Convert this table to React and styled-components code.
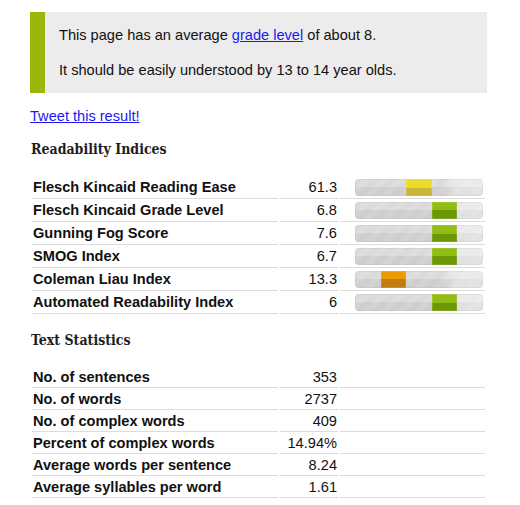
import React from "react";
import styled, { createGlobalStyle } from "styled-components";

const Global = createGlobalStyle`
  html, body { margin: 0; padding: 0; background: #fff; }
  body { font-family: "Liberation Sans", Arial, sans-serif; font-size: 14.6px; color: #111; }
`;

const Page = styled.div`
  width: 457px;
  padding: 12px 0 0 30px;
  display: flex;
  flex-direction: column;
`;

const Summary = styled.div`
  background: #ececec;
  border-left: 15px solid #99b80b;
  padding: 14px 14px;
  display: flex;
  flex-direction: column;
  gap: 17px;
`;

const Para = styled.p`
  margin: 0;
  line-height: 18px;
  font-size: 14.6px;
  color: #111;
`;

const Link = styled.a`
  color: #1a1aee;
  text-decoration: underline;
`;

const TweetLink = styled(Link)`
  margin-top: 14px;
  line-height: 18px;
  align-self: flex-start;
`;

const Heading = styled.h2`
  margin: ${(p) => p.$top}px 0 0 1px;
  font-family: "DejaVu Serif Condensed", "DejaVu Serif", serif;
  font-weight: bold;
  font-size: 14px;
  line-height: 18px;
  color: #1e1e1e;
`;

const Table = styled.div`
  margin-top: ${(p) => p.$top}px;
  display: grid;
  grid-template-columns: 246px 58px 145px;
  column-gap: 2px;
  padding: 0 2px;
`;

const Cell = styled.div`
  border-bottom: 1px solid #dcdcdc;
  height: ${(p) => p.$h}px;
  display: flex;
  align-items: center;
  font-size: 14.6px;
  color: #111;
`;

const Label = styled(Cell)`
  font-weight: bold;
  padding-left: 1px;
`;

const Value = styled(Cell)`
  justify-content: flex-end;
  padding-right: 1px;
`;

const BarCell = styled(Cell)`
  padding-left: 15px;
`;

const Bar = styled.div`
  position: relative;
  width: 128px;
  height: 17px;
  border-radius: 4px;
  overflow: hidden;
  box-shadow: inset 0 0 0 1px rgba(0, 0, 0, 0.04);
  background:
    linear-gradient(to bottom, rgba(255, 255, 255, 0.18) 0 50%, rgba(0, 0, 0, 0.02) 50% 100%),
    repeating-linear-gradient(135deg, rgba(255, 255, 255, 0) 0 6px, rgba(255, 255, 255, 0.12) 6px 12px),
    linear-gradient(to right, #d2d2d2 0%, #d2d2d2 68%, #e4e4e4 78%, #e6e6e6 100%);
`;

const markerColors = {
  yellow: ["#eadc2c", "#c8b53a"],
  green: ["#92bd14", "#6b9804"],
  orange: ["#eb9b04", "#c17e10"],
};

const Marker = styled.div`
  position: absolute;
  top: 0;
  bottom: 0;
  width: 20%;
  left: ${(p) => p.$index * 20}%;
  background: linear-gradient(
    to bottom,
    ${(p) => markerColors[p.$color][0]} 0 50%,
    ${(p) => markerColors[p.$color][1]} 50% 100%
  );
  box-shadow: inset 0 0 0 1px rgba(255, 255, 255, 0.12);
`;

const indices = [
  ["Flesch Kincaid Reading Ease", "61.3", 2, "yellow"],
  ["Flesch Kincaid Grade Level", "6.8", 3, "green"],
  ["Gunning Fog Score", "7.6", 3, "green"],
  ["SMOG Index", "6.7", 3, "green"],
  ["Coleman Liau Index", "13.3", 1, "orange"],
  ["Automated Readability Index", "6", 3, "green"],
];

const stats = [
  ["No. of sentences", "353"],
  ["No. of words", "2737"],
  ["No. of complex words", "409"],
  ["Percent of complex words", "14.94%"],
  ["Average words per sentence", "8.24"],
  ["Average syllables per word", "1.61"],
];

export default function App() {
  return (
    <>
      <Global />
      <Page>
        <Summary>
          <Para>
            This page has an average <Link href="#">grade level</Link> of about 8.
          </Para>
          <Para>It should be easily understood by 13 to 14 year olds.</Para>
        </Summary>
        <TweetLink href="#">Tweet this result!</TweetLink>
        <Heading $top={15}>Readability Indices</Heading>
        <Table $top={18}>
          {indices.map(([label, value, idx, color]) => (
            <React.Fragment key={label}>
              <Label $h={22}>{label}</Label>
              <Value $h={22}>{value}</Value>
              <BarCell $h={22}>
                <Bar>
                  <Marker $index={idx} $color={color} />
                </Bar>
              </BarCell>
            </React.Fragment>
          ))}
        </Table>
        <Heading $top={17}>Text Statistics</Heading>
        <Table $top={17}>
          {stats.map(([label, value]) => (
            <React.Fragment key={label}>
              <Label $h={21}>{label}</Label>
              <Value $h={21}>{value}</Value>
              <Cell $h={21} />
            </React.Fragment>
          ))}
        </Table>
      </Page>
    </>
  );
}
